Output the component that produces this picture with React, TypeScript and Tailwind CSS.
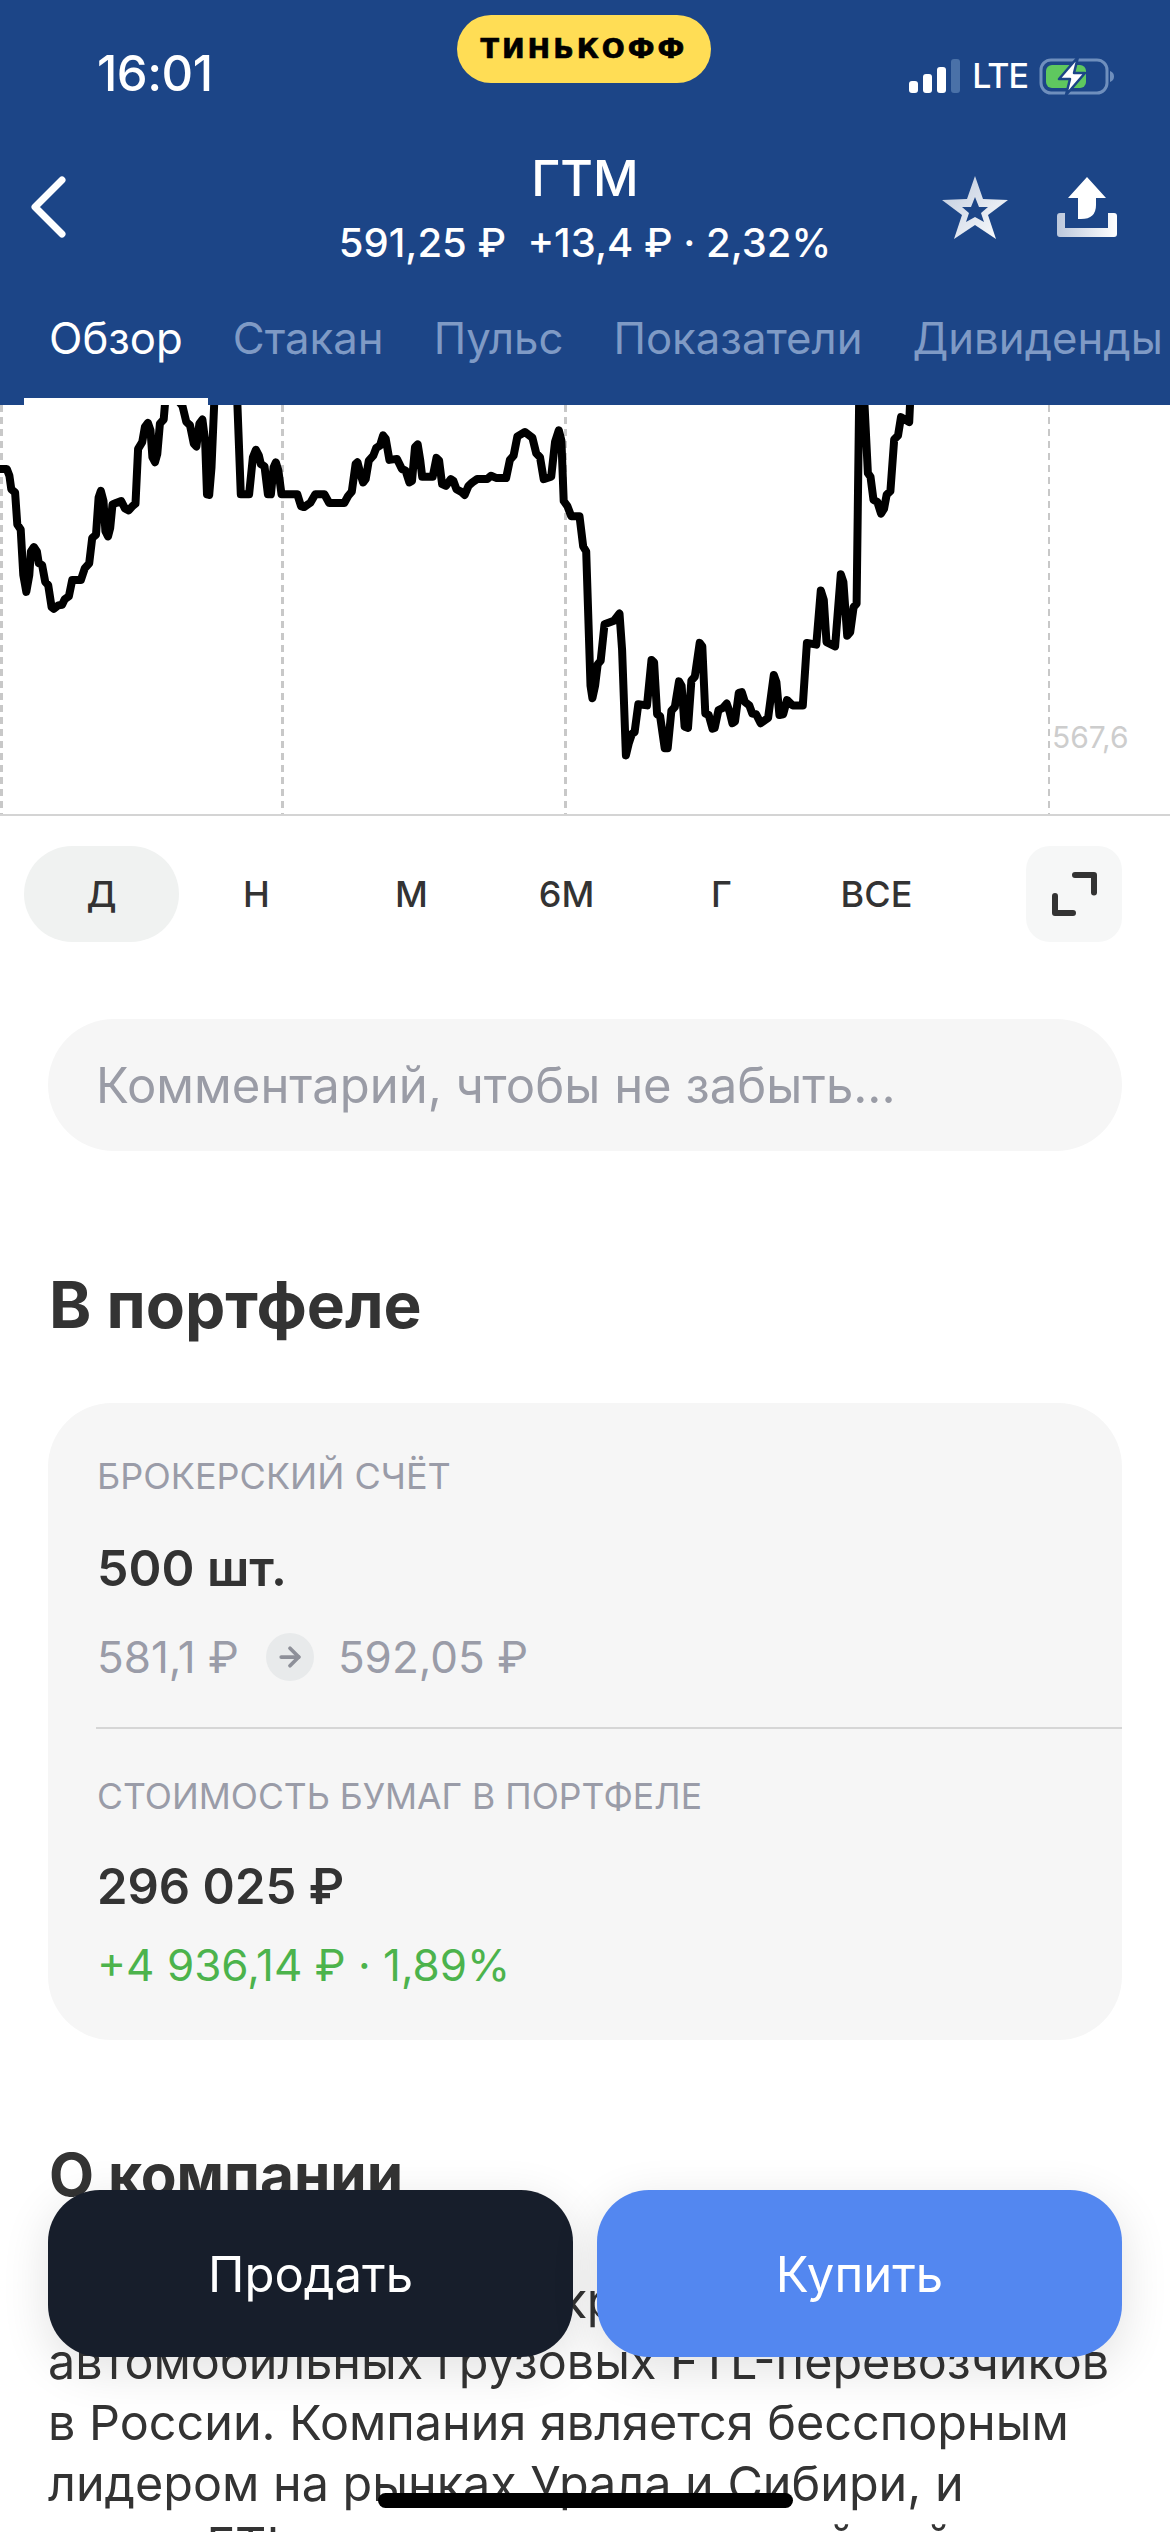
import { ArrowRight } from "lucide-react";

// chart traced from the screenshot, in crop units (left crop, then right crop)
const leftLine = [
  [0,205],[18,205],[25,225],[30,265],[40,275],[46,370],[55,385],[62,520],[70,570],[78,520],[82,450],[90,437],[98,450],[103,485],[112,490],[120,540],[128,550],[137,615],[143,620],[155,610],[165,608],[172,592],[183,583],[192,535],[215,535],[225,500],[237,485],[245,410],[255,400],[262,290],[268,270],[275,300],[280,390],[287,405],[293,380],[299,310],[310,305],[322,300],[332,322],[342,328],[352,315],[360,308],[367,145],[378,125],[385,80],[393,68],[400,90],[405,170],[412,185],[418,160],[425,70],[435,58],[440,-10],[465,-10],[485,18],[495,65],[505,75],[515,130],[522,138],[530,70],[538,58],[545,120],[550,280],[556,282],[562,200],[570,-10],[630,-10],[640,280],[662,280],[672,170],[680,148],[688,165],[693,190],[703,197],[712,280],[720,280],[727,200],[733,185],[740,210],[748,280],[790,280],[800,315],[808,318],[825,305],[838,280],[862,280],[875,306],[915,306],[925,285],[935,272],[945,190],[950,185],[958,220],[965,245],[972,235],[980,180],[992,165],[1000,142],[1010,135],[1018,105],[1025,115],[1035,178],[1055,175],[1068,205],[1078,210],[1088,245],[1095,240],[1103,140],[1110,132],[1117,180],[1122,228],[1150,228],[1160,172],[1167,180],[1175,250],[1185,255],[1198,235],[1205,240],[1213,265],[1225,272],[1235,282],[1245,255],[1255,245],[1268,235],[1295,235],[1305,225],[1320,232],[1345,232],[1355,178],[1365,165],[1375,108],[1395,95],[1415,112],[1425,158],[1435,170],[1445,235],[1465,228],[1475,125],[1485,90],[1492,120],[1498,300],[1508,315],[1518,345],[1540,345],[1550,435],[1558,450],
];
const rightLine = [
  [28,800],[33,835],[40,800],[47,740],[55,730],[65,628],[90,618],[105,598],[112,700],[122,995],[130,960],[138,935],[145,930],[155,852],[178,855],[190,728],[197,735],[205,880],[213,885],[225,975],[233,975],[243,870],[252,860],[263,788],[270,800],[278,915],[287,918],[296,785],[305,775],[318,680],[325,690],[333,878],[342,882],[352,920],[358,918],[368,868],[380,862],[390,850],[398,875],[405,905],[412,900],[422,820],[430,818],[438,845],[450,855],[458,878],[468,880],[480,905],[500,890],[515,770],[522,790],[530,882],[540,880],[550,840],[565,855],[592,855],[603,680],[628,685],[640,533],[648,560],[655,678],[678,690],[693,488],[700,510],[710,660],[718,650],[727,580],[735,570],[742,-10],[755,-10],[765,205],[772,215],[780,280],[790,285],[800,318],[808,305],[815,265],[825,255],[835,110],[845,100],[853,48],[875,62],[878,-10],
];

const chartPath =
  "M" +
  [
    ...leftLine.map(([x, y]) => [x / 2.6576, y / 2.97 - 5]),
    ...rightLine.map(([x, y]) => [580 + x / 2.6576, y / 2.8 - 5]),
  ]
    .map(([x, y]) => `${x.toFixed(1)} ${y.toFixed(1)}`)
    .join("L");

const tabs = ["Обзор", "Стакан", "Пульс", "Показатели", "Дивиденды"];
const ranges = ["Д", "Н", "М", "6М", "Г", "ВСЕ"];

function StatusIcons() {
  return (
    <div className="flex items-center">
      <svg width="52" height="36" viewBox="0 0 52 36">
        <rect x="0" y="23" width="9" height="12" rx="3" fill="#fff" />
        <rect x="14" y="16" width="9" height="19" rx="3" fill="#fff" />
        <rect x="28" y="9" width="9" height="26" rx="3" fill="#fff" />
        <rect x="42" y="1" width="9" height="34" rx="3" fill="#4a71a8" />
      </svg>
      <span className="ml-[11px] text-[34px] leading-[36px] font-medium tracking-[-1px] text-white">LTE</span>
      <svg className="ml-[11px]" width="76" height="40" viewBox="0 0 76 40">
        <rect x="2" y="4" width="66" height="33" rx="10" fill="none" stroke="#6f8fbd" strokeWidth="3" />
        <rect x="7" y="9" width="40" height="23" rx="6" fill="#5fc85f" />
        <path d="M71 15c3 1 4 3 4 5.500s-1 4.500-4 5.500z" fill="#6f8fbd" />
        <path
          d="M39 1 L20 23 L31 23 L27 39 L46 17 L35 17 Z"
          fill="#fff"
          stroke="#1c4587"
          strokeWidth="2.500"
          strokeLinejoin="round"
        />
      </svg>
    </div>
  );
}

function StarIcon() {
  return (
    <svg width="66" height="63" viewBox="0 0 66 63">
      <defs>
        <linearGradient id="star" x1="0" y1="0" x2="1" y2="1">
          <stop offset="0" stopColor="#bcc8dc" />
          <stop offset="1" stopColor="#fff" />
        </linearGradient>
      </defs>
      <path
        fillRule="evenodd"
        fill="url(#star)"
        d="M33 0 L41 23 L66 24 L46 39 L54 63 L33 49 L12 63 L20 39 L0 24 L25 23 Z M33 21 L29 31 L20 31 L27 37 L24 46 L33 41 L42 46 L39 37 L46 31 L37 31 Z"
      />
    </svg>
  );
}

function ShareIcon() {
  return (
    <svg width="60" height="60" viewBox="0 0 60 60">
      <defs>
        <linearGradient id="tray" x1="0" y1="0" x2="1" y2="0">
          <stop offset="0" stopColor="#bcc8dc" />
          <stop offset="1" stopColor="#fff" />
        </linearGradient>
      </defs>
      <path fill="#fff" d="M30 0 L49 21 L39 21 L39 28 Q39 42 24 42 L21 42 L21 21 L11 21 Z" />
      <path
        fill="url(#tray)"
        d="M3 36 L8 36 L8 51 L51 51 L51 36 L57 36 Q60 36 60 39 L60 57 Q60 60 57 60 L3 60 Q0 60 0 57 L0 39 Q0 36 3 36 Z"
      />
    </svg>
  );
}

export default function App() {
  return (
    <div className="relative h-[2532px] w-[1170px] overflow-hidden bg-white font-['Inter',sans-serif] text-[#333333]">
      <header className="h-[405px] bg-[#1c4587] text-white">
        <div className="grid h-[121px] grid-cols-[457px_254px_1fr] items-start">
          <span className="pl-[97px] pt-[49px] text-[49px] leading-[50px] font-medium tracking-[-0.5px]">16:01</span>
          <div className="mt-[15px] flex h-[68px] items-center justify-center rounded-[34px] bg-[#ffdd55]">
            <span className="font-['DejaVu_Sans',sans-serif] text-[27px] font-bold tracking-[3px] text-black [-webkit-text-stroke:0.7px_#000]">
              ТИНЬКОФФ
            </span>
          </div>
          <div className="flex justify-end pr-[55px] pt-[56px]">
            <StatusIcons />
          </div>
        </div>
        <div className="grid h-[172px] grid-cols-[1fr_auto_1fr] items-center">
          <svg width="38" height="62" viewBox="0 0 38 62" className="ml-[30px]">
            <path d="M32 4 L5 31 L32 58" fill="none" stroke="#fff" strokeWidth="7" strokeLinecap="round" strokeLinejoin="round" />
          </svg>
          <div className="text-center whitespace-nowrap">
            <div className="text-[50px] leading-[60px] font-medium">ГТМ</div>
            <div className="mt-[12px] text-[40px] leading-[46px] font-medium">591,25 ₽&nbsp;&nbsp;+13,4 ₽ · 2,32%</div>
          </div>
          <div className="mr-[53px] flex items-center justify-end gap-[49px]">
            <StarIcon />
            <ShareIcon />
          </div>
        </div>
        <nav className="flex h-[112px] pl-[24px]">
          {tabs.map((tab, index) => (
            <div
              key={tab}
              className={
                index === 0
                  ? "h-[112px] border-b-[7px] border-white px-[25px] pt-[19px] text-[43.700px] leading-[54px] text-white"
                  : "px-[25px] pt-[19px] text-[43.700px] leading-[54px] whitespace-nowrap text-[#7f9ac5]"
              }
            >
              {tab}
            </div>
          ))}
        </nav>
      </header>

      <div className="relative h-[411px] border-b-2 border-[#d4d4d4]">
        <svg width="1170" height="409" viewBox="0 0 1170 409" className="block">
          <path d="M1.500 0V409M282.500 0V409M565.500 0V409" stroke="#c8c8c8" strokeWidth="3" strokeDasharray="7 5" fill="none" />
          <path d="M1049 0V409" stroke="#c8c8c8" strokeWidth="2" strokeDasharray="7 5" fill="none" />
          <path d={chartPath} fill="none" stroke="#000" strokeWidth="8" strokeLinejoin="round" />
        </svg>
        <span className="absolute top-[313px] left-[1052px] text-[30px] leading-[38px] text-[#cdcdcd]">567,6</span>
      </div>

      <div className="flex items-center pt-[30px] pl-[24px]">
        {ranges.map((range, index) => (
          <div
            key={range}
            className={
              index === 0
                ? "flex h-[96px] w-[155px] items-center justify-center rounded-[48px] bg-[#f0f2f1] text-[36px] font-medium"
                : "flex h-[96px] w-[155px] items-center justify-center text-[36px] font-medium"
            }
          >
            {range}
          </div>
        ))}
        <div className="ml-[72px] flex h-[96px] w-[96px] items-center justify-center rounded-[24px] bg-[#f6f7f7]">
          <svg width="96" height="96" viewBox="0 0 96 96">
            <path
              d="M49 29H68V46.500M29 50V67H47"
              fill="none"
              stroke="#333"
              strokeWidth="6"
              strokeLinecap="round"
              strokeLinejoin="round"
            />
          </svg>
        </div>
      </div>

      <div className="mx-[48px] mt-[77px] flex h-[132px] items-center rounded-[66px] bg-[#f6f6f6] pl-[48px] pt-[2px] text-[49px] text-[#9a9ca6]">
        Комментарий, чтобы не забыть...
      </div>

      <h2 className="mt-[116px] pl-[49px] text-[64px] leading-[76px] font-bold">В портфеле</h2>

      <section className="mx-[48px] mt-[60px] h-[637px] rounded-[64px] bg-[#f6f6f6] pt-[52px]">
        <div className="pl-[49px] text-[36px] leading-[42px] text-[#9a9ca8]">БРОКЕРСКИЙ СЧЁТ</div>
        <div className="mt-[39px] pl-[49px] text-[50px] leading-[64px] font-semibold">500 шт.</div>
        <div className="mt-[29px] flex h-[56px] items-center pl-[49px] text-[44px] text-[#9a9ca8]">
          <span>581,1 ₽</span>
          <span className="mr-[24px] ml-[27px] flex h-[48px] w-[48px] items-center justify-center rounded-full bg-[#e8eaeb]">
            <ArrowRight size={30} strokeWidth={3} color="#8e9099" />
          </span>
          <span>592,05 ₽</span>
        </div>
        <div className="mt-[42px] ml-[48px] h-[2px] bg-[#d6d6d6]" />
        <div className="mt-[47px] pl-[49px] text-[35.500px] leading-[42px] text-[#9a9ca8]">
          СТОИМОСТЬ БУМАГ В ПОРТФЕЛЕ
        </div>
        <div className="mt-[37px] pl-[49px] text-[49px] leading-[64px] font-semibold">296 025 ₽</div>
        <div className="mt-[18px] pl-[49px] text-[44px] leading-[56px] text-[#4cb34c]">+4 936,14 ₽ · 1,89%</div>
      </section>

      <h2 className="mt-[97px] pl-[49px] text-[58.500px] leading-[76px] font-bold">О компании</h2>
      <p className="mt-[57px] px-[48px] text-[48.500px] leading-[61px] whitespace-nowrap">
        Globaltruck – один из крупнейших
        <br />
        автомобильных грузовых FTL-перевозчиков
        <br />в России. Компания является бесспорным
        <br />
        лидером на рынках Урала и Сибири, и
        <br />
        среди FTL-перевозчиков крупнейший
      </p>

      <div className="absolute top-[2190px] left-[48px] flex gap-[24px]">
        <button className="h-[167px] w-[525px] rounded-[52px] bg-[#171e2b] pt-[2px] text-[49px] text-white shadow-[0_12px_48px_rgba(0,0,0,0.12)]">
          Продать
        </button>
        <button className="h-[167px] w-[525px] rounded-[52px] bg-[#5387f0] pt-[2px] text-[49px] text-white shadow-[0_12px_48px_rgba(0,0,0,0.12)]">
          Купить
        </button>
      </div>
      <div className="absolute top-[2493px] left-[378px] h-[15px] w-[415px] rounded-full bg-black" />
    </div>
  );
}
